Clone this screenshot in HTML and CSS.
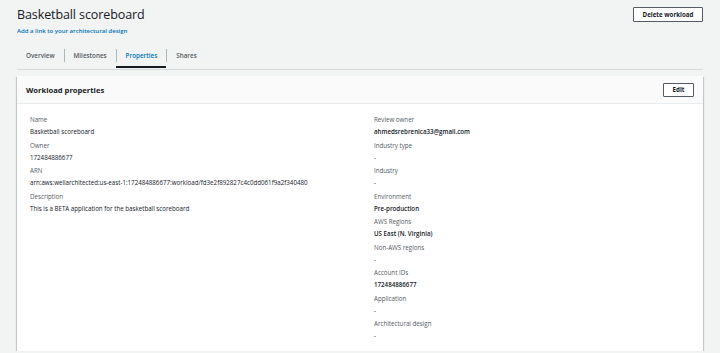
FILE: index.html
```html
<!doctype html>
<html lang="en">
<head>
    <meta charset="UTF-8">
    <title>Basketball scoreboard</title>
    <link rel="stylesheet" href="styles.css">
</head>
<body>
    <div class="page">
        <div class="head">
            <div>
                <h1 class="title">Basketball scoreboard</h1>
                <a class="link" href="#">Add a link to your architectural design</a>
            </div>
            <button class="btn">Delete workload</button>
        </div>

        <div class="tabs">
            <div class="tab"><span>Overview</span></div>
            <div class="tab"><span>Milestones</span></div>
            <div class="tab active"><span>Properties</span></div>
            <div class="tab"><span>Shares</span></div>
        </div>

        <div class="card">
            <div class="card-head">
                <h2>Workload properties</h2>
                <button class="btn btn-small">Edit</button>
            </div>
            <div class="card-body">
                <div class="col">
                    <div class="field">
                        <div class="label">Name</div>
                        <div class="value">Basketball scoreboard</div>
                    </div>
                    <div class="field">
                        <div class="label">Owner</div>
                        <div class="value">172484886677</div>
                    </div>
                    <div class="field">
                        <div class="label">ARN</div>
                        <div class="value">arn:aws:wellarchitected:us-east-1:172484886677:workload/fd3e2f892827c4c0dd061f9a2f340480</div>
                    </div>
                    <div class="field">
                        <div class="label">Description</div>
                        <div class="value">This is a BETA application for the basketball scoreboard</div>
                    </div>
                </div>
                <div class="col">
                    <div class="field">
                        <div class="label">Review owner</div>
                        <div class="value strong">ahmedsrebrenica33@gmail.com</div>
                    </div>
                    <div class="field">
                        <div class="label">Industry type</div>
                        <div class="value">-</div>
                    </div>
                    <div class="field">
                        <div class="label">Industry</div>
                        <div class="value">-</div>
                    </div>
                    <div class="field">
                        <div class="label">Environment</div>
                        <div class="value strong">Pre-production</div>
                    </div>
                    <div class="field">
                        <div class="label">AWS Regions</div>
                        <div class="value strong">US East (N. Virginia)</div>
                    </div>
                    <div class="field">
                        <div class="label">Non-AWS regions</div>
                        <div class="value">-</div>
                    </div>
                    <div class="field">
                        <div class="label">Account IDs</div>
                        <div class="value strong">172484886677</div>
                    </div>
                    <div class="field">
                        <div class="label">Application</div>
                        <div class="value">-</div>
                    </div>
                    <div class="field">
                        <div class="label">Architectural design</div>
                        <div class="value">-</div>
                    </div>
                </div>
            </div>
        </div>
    </div>
</body>
</html>
```

FILE: styles.css
```css
* {
    margin: 0;
    padding: 0;
    box-sizing: border-box;
}
body {
    background-color: #f2f3f3;
    font-family: "Open Sans", "Noto Sans", sans-serif;
    color: #16191f;
}
.page {
    padding: 6px 17px 0;
}
.head {
    display: flex;
    justify-content: space-between;
    align-items: flex-start;
}
.title {
    font-size: 12.5px;
    font-weight: 400;
    line-height: 18px;
    letter-spacing: -0.1px;
}
.link {
    display: block;
    margin-top: 2px;
    font-size: 6px;
    font-weight: 600;
    line-height: 10px;
    color: #0073bb;
    text-decoration: none;
}
.btn {
    font-family: inherit;
    background: #fff;
    border: 1px solid #545b64;
    border-radius: 1px;
    color: #16191f;
    font-size: 6.2px;
    font-weight: 700;
    height: 15px;
    width: 70px;
    margin-top: 1px;
}
.btn-small {
    width: 31px;
    height: 14px;
    margin-top: 0;
}

/* tabs */
.tabs {
    display: flex;
    margin-top: 10px;
    border-bottom: 1px solid #d5dbdb;
}
.tab {
    position: relative;
    padding: 3px 0 7px;
    font-size: 6.3px;
    font-weight: 600;
    line-height: 10px;
    color: #545b64;
}
.tab span {
    display: block;
    padding: 0 9px;
    border-left: 1px solid #aab7b8;
    line-height: 13px;
}
.tab:first-child span {
    border-left: 0;
}
.tab.active {
    color: #0073bb;
}
.tab.active::after {
    content: "";
    position: absolute;
    left: 0;
    right: 0;
    bottom: 1px;
    height: 2px;
    background: #16191f;
}

/* card */
.card {
    margin-top: 6px;
    background: #fff;
    box-shadow: 0 1px 1px 0 rgba(0, 28, 36, 0.3), 1px 1px 1px 0 rgba(0, 28, 36, 0.15), -1px 1px 1px 0 rgba(0, 28, 36, 0.15);
}
.card-head {
    display: flex;
    justify-content: space-between;
    align-items: center;
    height: 28px;
    padding: 0 9px;
    background: #fafafa;
    border-bottom: 1px solid #eaeded;
}
.card-head h2 {
    font-size: 7.6px;
    font-weight: 700;
}
.card-body {
    display: grid;
    grid-template-columns: 1fr 1fr;
    column-gap: 28px;
    padding: 10px 13px 7px;
}
.field {
    margin-bottom: 1.5px;
}
.label {
    font-size: 6.2px;
    line-height: 12px;
    color: #545b64;
}
.value {
    font-size: 6.2px;
    line-height: 12px;
    color: #16191f;
}
.value.strong {
    font-weight: 600;
}
```
